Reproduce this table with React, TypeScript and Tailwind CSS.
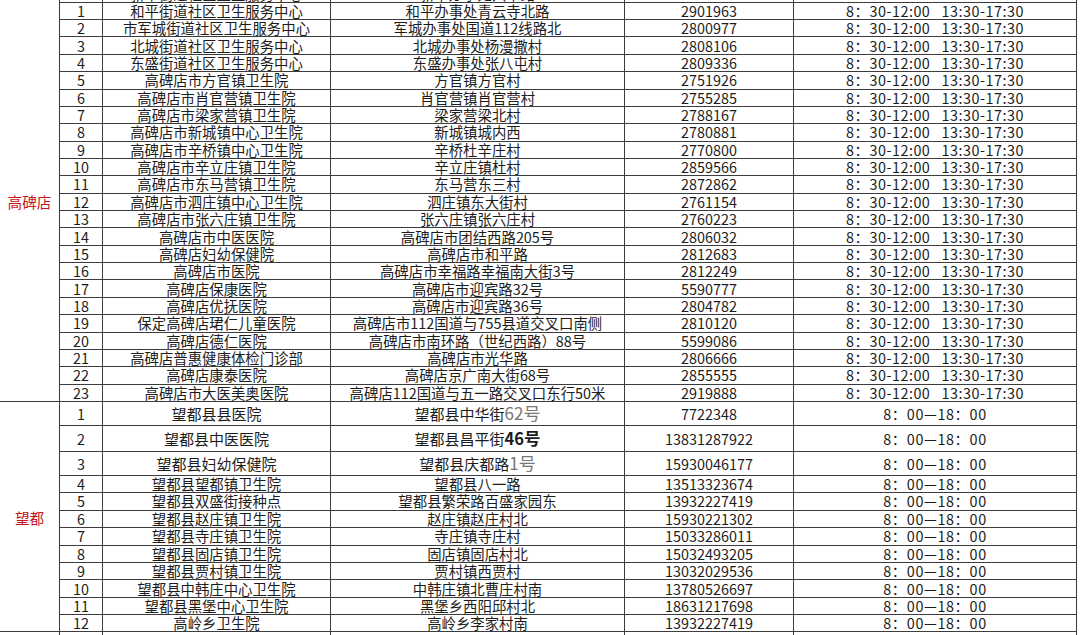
import React from "react";

type Row = [string, React.ReactNode, React.ReactNode, string];

const top: Row[] = [
  ["1", "和平街道社区卫生服务中心", "和平办事处青云寺北路", "2901963"],
  ["2", "市军城街道社区卫生服务中心", "军城办事处国道112线路北", "2800977"],
  ["3", "北城街道社区卫生服务中心", "北城办事处杨漫撒村", "2808106"],
  ["4", "东盛街道社区卫生服务中心", "东盛办事处张八屯村", "2809336"],
  ["5", "高碑店市方官镇卫生院", "方官镇方官村", "2751926"],
  ["6", "高碑店市肖官营镇卫生院", "肖官营镇肖官营村", "2755285"],
  ["7", "高碑店市梁家营镇卫生院", "梁家营梁北村", "2788167"],
  ["8", "高碑店市新城镇中心卫生院", "新城镇城内西", "2780881"],
  ["9", "高碑店市辛桥镇中心卫生院", "辛桥杜辛庄村", "2770800"],
  ["10", "高碑店市辛立庄镇卫生院", "辛立庄镇杜村", "2859566"],
  ["11", "高碑店市东马营镇卫生院", "东马营东三村", "2872862"],
  ["12", "高碑店市泗庄镇中心卫生院", "泗庄镇东大街村", "2761154"],
  ["13", "高碑店市张六庄镇卫生院", "张六庄镇张六庄村", "2760223"],
  ["14", "高碑店市中医医院", "高碑店市团结西路205号", "2806032"],
  ["15", "高碑店妇幼保健院", "高碑店市和平路", "2812683"],
  ["16", "高碑店市医院", "高碑店市幸福路幸福南大街3号", "2812249"],
  ["17", "高碑店保康医院", "高碑店市迎宾路32号", "5590777"],
  ["18", "高碑店优抚医院", "高碑店市迎宾路36号", "2804782"],
  ["19", "保定高碑店珺仁儿童医院", "高碑店市112国道与755县道交叉口南侧", "2810120"],
  ["20", "高碑店德仁医院", "高碑店市南环路（世纪西路）88号", "5599086"],
  ["21", "高碑店普惠健康体检门诊部", "高碑店市光华路", "2806666"],
  ["22", "高碑店康泰医院", "高碑店京广南大街68号", "2855555"],
  ["23", "高碑店市大医美奥医院", "高碑店112国道与五一路交叉口东行50米", "2919888"],
];

const wd: Row[] = [
  ["1", <span className="text-[15px]">望都县县医院</span>, <span className="text-[15px]">望都县中华街<span className="text-[17px] text-[#777]">62号</span></span>, "7722348"],
  ["2", <span className="text-[15px]">望都县中医医院</span>, <span className="text-[15px]">望都县昌平街<span className="text-[16.5px] font-bold">46号</span></span>, "13831287922"],
  ["3", <span className="text-[15px]">望都县妇幼保健院</span>, <span className="text-[15px]">望都县庆都路<span className="text-[17px] text-[#777]">1号</span></span>, "15930046177"],
  ["4", "望都县望都镇卫生院", "望都县八一路", "13513323674"],
  ["5", "望都县双盛街接种点", "望都县繁荣路百盛家园东", "13932227419"],
  ["6", "望都县赵庄镇卫生院", "赵庄镇赵庄村北", "15930221302"],
  ["7", "望都县寺庄镇卫生院", "寺庄镇寺庄村", "15033286011"],
  ["8", "望都县固店镇卫生院", "固店镇固店村北", "15032493205"],
  ["9", "望都县贾村镇卫生院", "贾村镇西贾村", "13032029536"],
  ["10", "望都县中韩庄中心卫生院", "中韩庄镇北曹庄村南", "13780526697"],
  ["11", "望都县黑堡中心卫生院", "黑堡乡西阳邱村北", "18631217698"],
  ["12", "高岭乡卫生院", "高岭乡李家村南", "13932227419"],
];

const wdHeights = [
  "h-[24.3px]",
  "h-[25.7px]",
  "h-[24.3px]",
  "h-[16.3px]",
  "h-[18.4px]",
  "h-[17.36px]",
  "h-[17.36px]",
  "h-[17.36px]",
  "h-[17.36px]",
  "h-[17.36px]",
  "h-[17.36px]",
  "h-[17.36px]",
];

const cell =
  "flex items-center justify-center whitespace-nowrap overflow-hidden border-r border-[#3c3c3c]";

function Cells({
  r,
  hours,
  h,
  track,
}: {
  r: Row;
  hours: string;
  h: string;
  track: string;
}) {
  return (
    <div className={`flex border-b border-[#3c3c3c] ${h}`}>
      <div className={`${cell} w-[43px]`}>{r[0]}</div>
      <div className={`${cell} w-[228px]`}>{r[1]}</div>
      <div className={`${cell} w-[294px]`}>{r[2]}</div>
      <div className={`${cell} w-[169px]`}>{r[3]}</div>
      <div className={`${cell} w-[283px]`}>
        <span className={track}>{hours}</span>
      </div>
    </div>
  );
}

export default function App() {
  const h1 = "8：30-12:00\u00a0\u00a0\u00a013:30-17:30";
  const h2 = "8：00—18：00";
  return (
    <div
      className="w-[1080px] h-[635px] overflow-hidden bg-white text-[#1c1c1c] text-[14.4px] leading-[16px]"
      style={{ fontFamily: '"Noto Sans CJK SC", "Noto Sans", sans-serif' }}
    >
      {/* partially visible top row */}
      <div className="flex mt-[-14.66px] h-[17.36px]">
        <div className="w-[60px] border-r border-[#3c3c3c]" />
        <div className="flex border-b border-[#3c3c3c]">
          <div className={`${cell} w-[43px]`} />
          <div className={`${cell} w-[228px]`}>新华街道社区卫生服务中心</div>
          <div className={`${cell} w-[294px]`}>新华办事处兴华路</div>
          <div className={`${cell} w-[169px]`} />
          <div className={`${cell} w-[283px]`} />
        </div>
      </div>

      {/* 高碑店 */}
      <div className="flex">
        <div className="w-[60px] flex items-center justify-center border-r border-b border-[#3c3c3c] text-[#c4161c] text-[14.6px]">
          高碑店
        </div>
        <div className="flex flex-col">
          {top.map((r) => (
            <Cells key={r[0]} r={r} hours={h1} h="h-[17.36px]" track="tracking-[0.5px]" />
          ))}
        </div>
      </div>

      {/* 望都 */}
      <div className="flex">
        <div className="w-[60px] flex items-center justify-center border-r border-b border-[#3c3c3c] text-[#c4161c] text-[14.6px] pt-[2px]">
          望都
        </div>
        <div className="flex flex-col">
          {wd.map((r, i) => (
            <Cells key={r[0]} r={r} hours={h2} h={wdHeights[i]} track="tracking-[0.6px]" />
          ))}
        </div>
      </div>

      {/* partially visible bottom row */}
      <div className="flex h-[17px]">
        <div className="w-[60px] border-r border-[#3c3c3c]" />
        <div className={`${cell} w-[43px]`} />
        <div className={`${cell} w-[228px]`} />
        <div className={`${cell} w-[294px]`} />
        <div className={`${cell} w-[169px]`} />
        <div className={`${cell} w-[283px]`} />
      </div>
    </div>
  );
}
